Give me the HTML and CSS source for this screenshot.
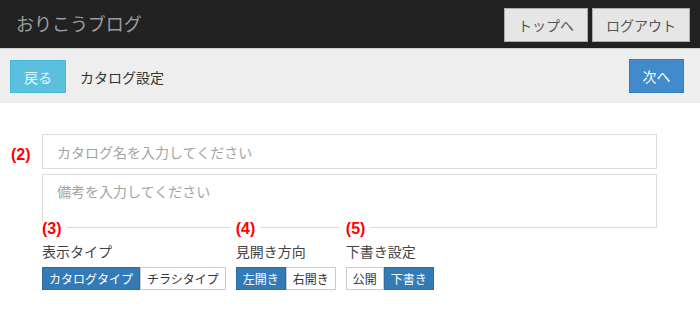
FILE: index.html
```html
<!DOCTYPE html>
<html lang="ja">
<head>
    <meta charset="UTF-8">
    <meta name="viewport" content="width=device-width, initial-scale=1.0">
    <title>おりこうブログ</title>
    <link rel="stylesheet" href="styles.css">
</head>
<body>

    <header class="navbar">
        <div class="brand">おりこうブログ</div>
        <div class="nav-buttons">
            <button class="btn-nav">トップへ</button>
            <button class="btn-nav">ログアウト</button>
        </div>
    </header>

    <div class="subbar">
        <button class="btn-back">戻る</button>
        <span class="page-title">カタログ設定</span>
        <button class="btn-next">次へ</button>
    </div>

    <main class="content">
        <div class="form-row">
            <span class="mark mark-side">(2)</span>
            <div class="fields">
                <input type="text" class="field-name" placeholder="カタログ名を入力してください">
                <textarea class="field-note" placeholder="備考を入力してください"></textarea>
            </div>
        </div>

        <div class="options">
            <div class="option">
                <span class="mark">(3)</span>
                <div class="option-title">表示タイプ</div>
                <div class="btn-group">
                    <button class="toggle active">カタログタイプ</button>
                    <button class="toggle">チラシタイプ</button>
                </div>
            </div>
            <div class="option">
                <span class="mark">(4)</span>
                <div class="option-title">見開き方向</div>
                <div class="btn-group">
                    <button class="toggle active">左開き</button>
                    <button class="toggle">右開き</button>
                </div>
            </div>
            <div class="option">
                <span class="mark">(5)</span>
                <div class="option-title">下書き設定</div>
                <div class="btn-group">
                    <button class="toggle">公開</button>
                    <button class="toggle active">下書き</button>
                </div>
            </div>
        </div>
    </main>

</body>
</html>
```

FILE: styles.css
```css
body {
    margin: 0;
    font-family: "Noto Sans CJK JP", sans-serif;
    background: #fff;
    color: #333;
}
button {
    font-family: inherit;
    cursor: pointer;
    margin: 0;
}
.navbar {
    height: 48px;
    background: #222;
    border-bottom: 1px solid #d0d0d0;
    display: flex;
    align-items: center;
    justify-content: space-between;
    padding: 0 10px 0 16px;
}
.brand {
    color: #9d9d9d;
    font-size: 18px;
    line-height: 20px;
    margin-top: -2px;
}
.nav-buttons {
    display: flex;
    gap: 4px;
    margin-top: 2px;
}
.btn-nav {
    height: 34px;
    padding: 0 13px;
    font-size: 14px;
    color: #555;
    background: #e6e6e6;
    border: 1px solid #adadad;
}
.subbar {
    background: #eee;
    display: flex;
    align-items: center;
    padding: 11px 16px 10px 10px;
}
.btn-back {
    width: 56px;
    height: 33px;
    font-size: 14px;
    color: #eaf7fb;
    background: #5bc0de;
    border: 1px solid #46b8da;
}
.page-title {
    font-size: 14px;
    margin-left: 14px;
    color: #333;
}
.btn-next {
    margin-left: auto;
    width: 55px;
    height: 34px;
    margin-top: -1px;
    font-size: 14px;
    color: #fff;
    background: #428bca;
    border: 1px solid #357ebd;
}
.content {
    padding: 31px 43px 0 0;
}
.form-row {
    display: flex;
}
.mark {
    font-family: "Liberation Sans", sans-serif;
    font-weight: bold;
    font-size: 16px;
    line-height: 14px;
    color: #f00;
}
.mark-side {
    width: 42px;
    box-sizing: border-box;
    padding: 14px 0 0 11px;
}
.fields {
    flex: 1;
    display: flex;
    flex-direction: column;
    gap: 5px;
}
.field-name,
.field-note {
    box-sizing: border-box;
    width: 100%;
    border: 1px solid #dcdcdc;
    font-family: inherit;
    font-size: 14px;
    color: #333;
    padding: 0 14px;
    margin: 0;
    outline: none;
}
.field-name {
    height: 35px;
}
.field-note {
    height: 54px;
    padding-top: 6px;
    resize: none;
    display: block;
}
.field-name::placeholder,
.field-note::placeholder {
    color: #a3a3a3;
}
.options {
    display: flex;
    gap: 10px;
    padding-left: 42px;
    margin-top: -6px;
}
.option {
    display: flex;
    flex-direction: column;
    align-items: flex-start;
}
.option .mark {
    background: #fff;
    margin-left: -6px;
    padding: 0 5px 0 6px;
}
.option-title {
    font-size: 14px;
    line-height: 20px;
    color: #444;
    margin: 5px 0 6px;
}
.btn-group {
    display: flex;
}
.toggle {
    height: 23px;
    padding: 0 6px;
    font-size: 12px;
    color: #333;
    background: #fff;
    border: 1px solid #ccc;
}
.toggle.active {
    color: #fff;
    background: #337ab7;
    border-color: #2e6da4;
}
```
